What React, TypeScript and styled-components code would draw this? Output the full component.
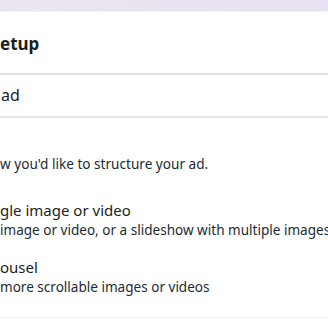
import React from "react";
import styled, { createGlobalStyle } from "styled-components";

const Global = createGlobalStyle`
  html, body { margin: 0; padding: 0; background: #ffffff; }
  body { font-family: "Noto Sans", "Liberation Sans", Arial, sans-serif; color: #1c2b33; }
  #root { width: 328px; height: 320px; overflow: hidden; }
`;

const Page = styled.div`
  width: 328px;
  height: 320px;
  overflow: hidden;
  background: #ffffff;
  display: flex;
  flex-direction: column;
`;

const TopBar = styled.div`
  height: 11px;
  flex: none;
  background: linear-gradient(90deg, #ebe6ee 0%, #e9e4f1 50%, #e7e3f4 100%);
  border-bottom: 1px solid #f1eff6;
`;

const Header = styled.h2`
  margin: 0;
  padding: 20px 0 0 0;
  height: 41px;
  font-size: 17px;
  line-height: 24px;
  font-weight: 700;
  color: #1c1e21;
`;

const SelectBox = styled.div`
  border-top: 2px solid #e2e3e6;
  border-bottom: 2px solid #e4e5e8;
  height: 38px;
  padding-top: 1px;
  padding-bottom: 2px;
  box-sizing: content-box;
  display: flex;
  align-items: center;
  font-size: 16px;
  color: #1c1e21;
  padding-left: 1px;
`;

const Section = styled.div`
  display: flex;
  flex-direction: column;
  padding-top: 37px;
`;

const Prompt = styled.p`
  margin: 0 0 27px 0;
  font-size: 13.6px;
  line-height: 18px;
  color: #1c2b33;
`;

const Option = styled.div<{ $gap: number }>`
  display: flex;
  flex-direction: column;
  margin-bottom: ${(p) => p.$gap}px;
`;

const OptionTitle = styled.div`
  font-size: 15px;
  line-height: 21px;
  color: #1c1e21;
`;

const OptionDesc = styled.div`
  font-size: 13.55px;
  line-height: 19px;
  color: #1c2b33;
  white-space: nowrap;
`;

const BottomRule = styled.div`
  border-top: 1px solid #eceef1;
`;

export default function App() {
  return (
    <>
      <Global />
      <Page>
        <TopBar />
        <Header>etup</Header>
        <SelectBox>ad</SelectBox>
        <Section>
          <Prompt>w you'd like to structure your ad.</Prompt>
          <Option $gap={17}>
            <OptionTitle>gle image or video</OptionTitle>
            <OptionDesc>image or video, or a slideshow with multiple images</OptionDesc>
          </Option>
          <Option $gap={20}>
            <OptionTitle>ousel</OptionTitle>
            <OptionDesc>more scrollable images or videos</OptionDesc>
          </Option>
          <BottomRule />
        </Section>
      </Page>
    </>
  );
}
